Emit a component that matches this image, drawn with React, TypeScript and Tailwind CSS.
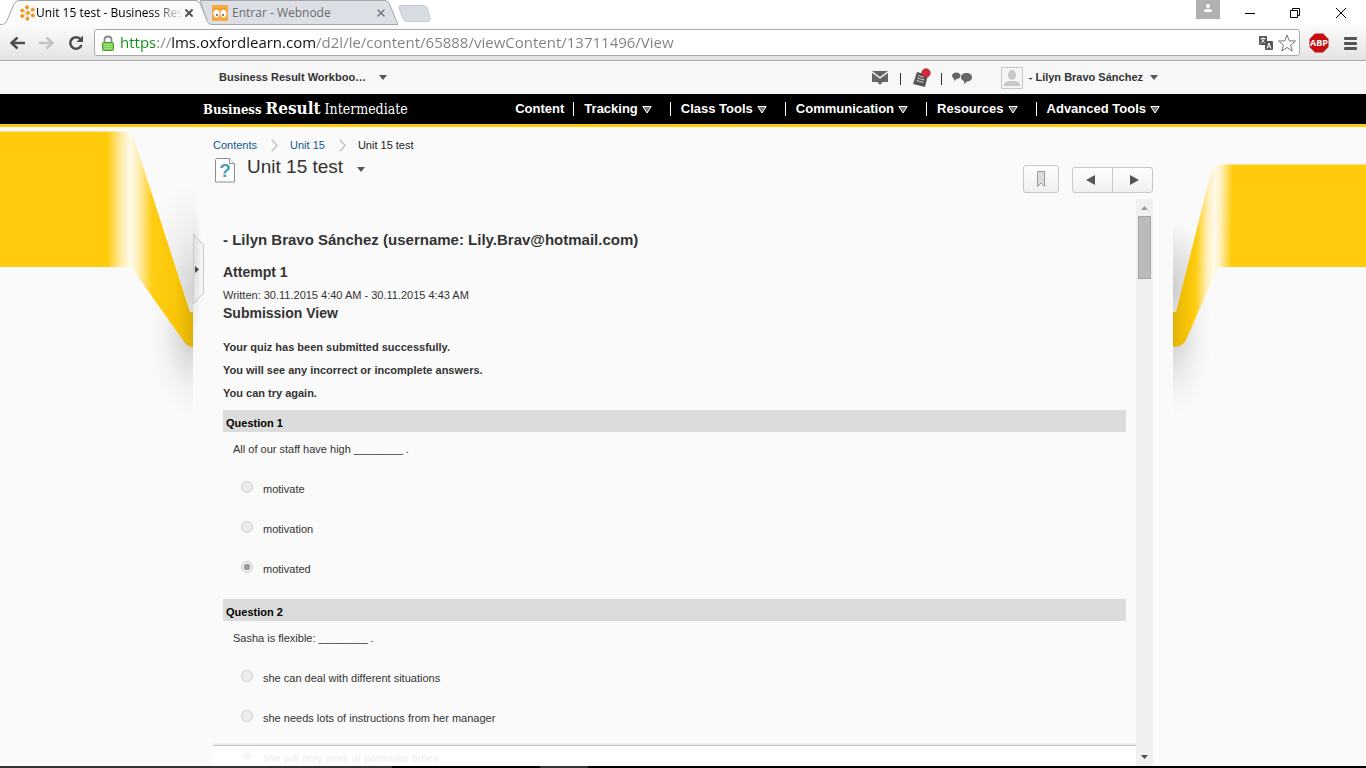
import React from 'react';
import { X } from 'lucide-react';

interface Question {
  id: number;
  text: string;
  options: string[];
  selected: number;
}

const questions: Question[] = [
  {
    id: 1,
    text: 'All of our staff have high ________ .',
    options: ['motivate', 'motivation', 'motivated'],
    selected: 2
  },
  {
    id: 2,
    text: 'Sasha is flexible: ________ .',
    options: [
      'she can deal with different situations',
      'she needs lots of instructions from her manager',
      'she will only work at particular times'
    ],
    selected: 2
  }
];

const navItems = ['Tracking', 'Class Tools', 'Communication', 'Resources', 'Advanced Tools'];

const Caret: React.FC<{ className?: string }> = ({ className }) => (
  <svg className={className} width="8" height="5" viewBox="0 0 8 5" fill="#565656">
    <path d="M0 0h8L4 5z" />
  </svg>
);

const TabStrip: React.FC = () => (
  <div className="relative flex h-[25px] items-start bg-white font-['Open_Sans','Noto_Sans',sans-serif] text-[12px] leading-[25px]">
    <div className="relative z-10 h-[25px] w-[212px] shrink-0">
      <svg className="absolute inset-0" width="213" height="25" viewBox="0 0 213 25">
        <path d="M0 24.5c4 0 6-1 7-4L14 4q2-3.500 5-3.500h177q3 0 4.500 3.500l6.500 16.500c1 3 2 4 6 4V25H0z" fill="#fbfbfb" />
        <path d="M0 24.500c4 0 6-1 7-4L14 4q2-3.500 5-3.500h177q3 0 4.500 3.500l6.500 16.500c1 3 2 4 6 4" fill="none" stroke="#a5a5a5" />
      </svg>
      <div className="relative flex items-center justify-between pl-5 pr-[17px]">
        <svg className="shrink-0" width="16" height="16" viewBox="0 0 16 16" fill="#f7941d" stroke="#f7941d">
          <path d="M8 8L7 2.200M8 8l4.800-3.500M8 8l5 2.500M8 8l-.5 5.800M8 8l-5.800 3M8 8L2.200 5.500" strokeWidth=".6" />
          <circle cx="8" cy="8" r="1.300" />
          <circle cx="7" cy="2.200" r="1.500" />
          <circle cx="12.800" cy="4.500" r="1.500" />
          <circle cx="13" cy="10.500" r="1.500" />
          <circle cx="7.500" cy="13.800" r="1.500" />
          <circle cx="2.200" cy="11" r="1.500" />
          <circle cx="2.200" cy="5.500" r="1.500" />
        </svg>
        <span className="whitespace-nowrap text-black mask-r-from-80%">Unit 15 test - Business Res</span>
        <button aria-label="Close tab" className="shrink-0 text-[#555]">
          <X size={12} strokeWidth={4} />
        </button>
      </div>
    </div>
    <div className="relative -ml-3 h-[25px] w-[198px] shrink-0">
      <svg className="absolute inset-0" width="198" height="25" viewBox="0 0 198 25">
        <path d="M0 .5h185q3 0 4.500 3.500L196 20q1 4.500 4 4.500H8z" fill="#dcdfe6" stroke="#a5a5a5" />
      </svg>
      <div className="relative flex items-center pl-3">
        <svg width="16" height="16" viewBox="0 0 16 16">
          <rect width="16" height="16" rx="1" fill="#f8a83c" />
          <ellipse cx="4.500" cy="8.500" rx="3" ry="4" fill="#fff" />
          <ellipse cx="11.500" cy="8.500" rx="3" ry="4" fill="#fff" />
          <circle cx="5" cy="10" r="1" fill="#555" />
          <circle cx="11" cy="10" r="1" fill="#555" />
          <path d="M2 5q2.500-3 5 0M9 5q2.500-3 5 0" fill="none" stroke="#e08a1d" />
        </svg>
        <span className="ml-1 w-[143px] text-[#6b6b6b]">Entrar - Webnode</span>
        <button aria-label="Close tab" className="text-[#777]">
          <X size={12} strokeWidth={3} />
        </button>
      </div>
    </div>
    <button aria-label="New tab" className="mt-[5px]">
      <svg width="33" height="17" viewBox="0 0 33 17">
        <path d="M3 .5h22q3 0 4 2l3 10q1 4-3 4H9q-3 0-4-3L1 3Q.5.500 3 .5z" fill="#d7dbe2" stroke="#c6cad1" />
      </svg>
    </button>
    <div className="ml-auto flex h-[25px] items-start">
      <button aria-label="User" className="flex h-[19px] w-6 justify-center bg-[#b1b1b1] pt-1">
        <svg width="8" height="8" viewBox="0 0 8 8" fill="#fff">
          <circle cx="4" cy="2" r="2" />
          <path d="M0 8V6.500Q1 4.800 4 4.800t4 1.700V8z" />
        </svg>
      </button>
      <button aria-label="Minimize" className="ml-[25px] h-[25px]">
        <svg width="10" height="10" viewBox="0 0 10 10" stroke="#000"><path d="M0 5.500h10" /></svg>
      </button>
      <button aria-label="Restore" className="ml-[35px] h-[25px]">
        <svg width="10" height="10" viewBox="0 0 10 10" fill="none" stroke="#000">
          <path d="M.5 2.500h7v7h-7zM2.500 2.500v-2h7v7h-2" />
        </svg>
      </button>
      <button aria-label="Close" className="mr-5 ml-9 h-[25px]">
        <svg width="10" height="10" viewBox="0 0 10 10" stroke="#000"><path d="M0 0l10 10M10 0L0 10" /></svg>
      </button>
    </div>
  </div>
);

const Toolbar: React.FC = () => (
  <div className="flex h-9 shrink-0 items-center border-b border-[#a9a9a9] bg-linear-to-b from-[#fbfbfb] to-[#e4e4e4] pl-[9px] pr-2">
    <button aria-label="Back">
      <svg width="17" height="14" viewBox="0 0 17 14" fill="none" stroke="#4c4c4c" strokeWidth="2.500">
        <path d="M16 7H3M8.500 1.500L2.500 7l6 5.500" />
      </svg>
    </button>
    <button aria-label="Forward" className="ml-3">
      <svg width="17" height="14" viewBox="0 0 17 14" fill="none" stroke="#c4c4c4" strokeWidth="2.500">
        <path d="M1 7h13M8.500 1.500l6 5.500-6 5.500" />
      </svg>
    </button>
    <button aria-label="Reload" className="ml-[13px]">
      <svg width="16" height="16" viewBox="0 0 16 16">
        <path d="M12.300 4A5.800 5.800 0 1 0 13.500 10" fill="none" stroke="#4c4c4c" strokeWidth="2.500" />
        <path d="M15 .5V7H8.500z" fill="#4c4c4c" />
      </svg>
    </button>
    <div className="ml-2.5 flex h-[27px] flex-1 items-center rounded-[3px] border border-[#a9a9a9] bg-white pl-[7px] pr-[3px]">
      <svg width="12" height="16" viewBox="0 0 12 16">
        <path d="M2.500 8V4.500Q2.500 1.500 6 1.500t3.500 3V8" fill="none" stroke="#8b8b8b" strokeWidth="1.800" />
        <rect x=".5" y="7.500" width="11" height="8" rx="1" fill="#7ccf55" stroke="#4f9b34" />
        <path d="M2 9.500h8M2 11.500h8M2 13.500h8" stroke="#a3e283" />
      </svg>
      <input
        type="text"
        aria-label="Address"
        defaultValue="https://lms.oxfordlearn.com/d2l/le/content/65888/viewContent/13711496/View"
        className="mb-0.5 ml-1.5 h-6 min-w-0 flex-1 bg-[linear-gradient(90deg,#0c8f12_35px,#888_35px,#888_52px,#111_52px,#111_195px,#808080_195px)] bg-clip-text font-['Open_Sans','Noto_Sans',sans-serif] text-[15px] text-transparent outline-none"
      />
      <button aria-label="Translate">
        <svg width="14" height="14" viewBox="0 0 14 14">
          <rect width="8" height="9" rx="1" fill="#565656" />
          <path d="M1.500 2.500h5M4 1v1.500M5.500 2.500Q5 5.500 1.500 7M2.500 2.500Q3.500 6 6.500 7" stroke="#fff" strokeWidth=".8" fill="none" />
          <rect x="6" y="5" width="8" height="9" rx="1" fill="#565656" />
          <path d="M8 12.500l2-5.500 2 5.500M8.700 10.800h2.600" stroke="#fff" fill="none" />
        </svg>
      </button>
      <button aria-label="Bookmark this page" className="ml-[5px]">
        <svg width="18" height="18" viewBox="0 0 18 18" fill="#fff" stroke="#777" strokeLinejoin="round">
          <path d="M9 1l2.200 5.800 6.300.2-4.900 3.900 1.700 6.100L9 13.500 3.700 17l1.700-6.100L.5 7l6.300-.2z" />
        </svg>
      </button>
    </div>
    <button aria-label="Adblock Plus" className="ml-[9px]">
      <svg width="20" height="20" viewBox="0 0 20 20">
        <path d="M6 .5h8L19.500 6v8L14 19.500H6L.5 14V6z" fill="#c70d0d" />
        <text x="10" y="13" textAnchor="middle" fill="#fff" fontSize="9" fontWeight="bold" fontFamily="Open Sans, sans-serif">ABP</text>
      </svg>
    </button>
    <button aria-label="Menu" className="ml-[15px]">
      <svg width="14" height="14" viewBox="0 0 14 14" fill="#555">
        <rect x="0" y="1" width="13" height="3" rx="1" />
        <rect x="0" y="6" width="13" height="3" rx="1" />
        <rect x="0" y="11" width="13" height="3" rx="1" />
      </svg>
    </button>
  </div>
);

const MiniBar: React.FC = () => (
  <div className="h-[33px] shrink-0 bg-[#f7f7f7]">
    <div className="mx-auto flex h-[33px] w-full max-w-[960px] items-center pl-4 text-[11px] font-bold text-[#333]">
      <button className="flex items-center">
        Business Result Workboo…
        <Caret className="ml-[13px]" />
      </button>
      <div className="ml-auto flex items-center pr-[5px]">
        <button aria-label="Messages">
          <svg width="16" height="14" viewBox="0 0 16 14" fill="#666">
            <path d="M0 0h16L8 6z" />
            <path d="M0 1.800l8 6 8-6V11h-5.500L8 14l-2.500-3H0z" />
          </svg>
        </button>
        <span className="ml-3 mt-0.5 h-3 w-px bg-[#333]" />
        <button aria-label="Updates" className="ml-3">
          <svg width="18" height="20" viewBox="0 0 18 20">
            <path d="M4 4l11 3-3 12L0 16z" fill="#555" />
            <path d="M5 7.500l6 1.700M4.300 10l7 2M3.600 12.500l7 2" stroke="#ccc" />
            <circle cx="13" cy="5" r="4.200" fill="#d8293a" stroke="#97303a" strokeWidth=".8" />
          </svg>
        </button>
        <span className="ml-[10px] mt-0.5 h-3 w-px bg-[#333]" />
        <button aria-label="Subscriptions" className="ml-[10px]">
          <svg width="20" height="12" viewBox="0 0 20 12" fill="#666">
            <path d="M4.300.5C6.700.500 8.500 1.800 8.500 3.800S6.700 7 4.600 7L2 9V6.500C.8 6 0 5 0 3.800 0 1.800 2 .5 4.300.5z" />
            <path d="M14.500 1c3.300 0 5.500 1.800 5.500 4.200S17.800 9.500 15 9.500L12 12V9C10 8.300 9 7 9 5.200 9 2.800 11.200 1 14.500 1z" />
          </svg>
        </button>
        <button className="ml-[29px] flex items-center">
          <svg width="22" height="22" viewBox="0 0 22 22">
            <rect x=".5" y=".5" width="21" height="21" fill="#f5f5f5" stroke="#c8c8c8" />
            <ellipse cx="11" cy="8" rx="4" ry="5" fill="#c8c8c8" />
            <path d="M3 19v-2q1-2 5-3h6q4 1 5 3v2z" fill="#c8c8c8" />
          </svg>
          <span className="ml-1.5">- Lilyn Bravo Sánchez</span>
          <Caret className="ml-[7px]" />
        </button>
      </div>
    </div>
  </div>
);

const NavBar: React.FC = () => (
  <nav className="h-[33px] shrink-0 border-b-3 border-[#ffcb05] bg-black">
    <div className="mx-auto flex h-[30px] w-full max-w-[960px] items-center text-white">
      <a href="#home" className="flex items-baseline gap-1 whitespace-nowrap font-['DejaVu_Serif_Condensed','DejaVu_Serif',serif] text-[14px] leading-[28px]">
        <span className="text-[13px] font-bold">Business</span>
        <span className="text-[17px] font-bold">Result</span>
        <span>Intermediate</span>
      </a>
      <div className="ml-auto flex items-center pr-[3px] text-[13px] font-bold">
        <a href="#content" className="pr-[9px]">Content</a>
        {navItems.map((item, i) => (
          <div key={item} className="flex items-center">
            <span className="h-3.5 w-px bg-white" />
            <button className={`flex items-center pl-2.5 ${i < navItems.length - 1 ? 'pr-[18px]' : ''}`}>
              {item}
              <svg className="ml-1 mt-0.5" width="10" height="8" viewBox="0 0 10 8">
                <path d="M.8.500h8.400L5 7z" fill="#777" stroke="#fff" />
              </svg>
            </button>
          </div>
        ))}
      </div>
    </div>
  </nav>
);

const LeftRibbon: React.FC = () => (
  <div className="flex min-w-0 flex-1 justify-end overflow-hidden">
    <div className="mt-[5px] h-[135px] flex-1 bg-[#ffcb0a]" />
    <svg className="shrink-0" width="193" height="300" viewBox="0 127 193 300">
      <defs>
        <linearGradient id="leftGloss" gradientUnits="userSpaceOnUse" x1="107" y1="0" x2="193" y2="0">
          <stop offset="0" stopColor="#ffcb0a" />
          <stop offset=".16" stopColor="#ffeaa5" />
          <stop offset=".27" stopColor="#fffaea" />
          <stop offset=".36" stopColor="#ffefba" />
          <stop offset=".53" stopColor="#ffcd12" />
          <stop offset=".8" stopColor="#fbc608" />
          <stop offset="1" stopColor="#dcae06" />
        </linearGradient>
        <radialGradient id="leftUpper" gradientUnits="userSpaceOnUse" cx="0" cy="0" r="1" gradientTransform="translate(193 290) scale(44 110)">
          <stop offset="0" stopColor="#000" stopOpacity=".16" />
          <stop offset=".5" stopColor="#000" stopOpacity=".05" />
          <stop offset="1" stopColor="#000" stopOpacity="0" />
        </radialGradient>
        <radialGradient id="leftLower" gradientUnits="userSpaceOnUse" cx="0" cy="0" r="1" gradientTransform="translate(193 335) scale(46 85)">
          <stop offset="0" stopColor="#000" stopOpacity=".2" />
          <stop offset=".3" stopColor="#000" stopOpacity=".11" />
          <stop offset=".65" stopColor="#000" stopOpacity=".03" />
          <stop offset="1" stopColor="#000" stopOpacity="0" />
        </radialGradient>
      </defs>
      <path d="M134 138L190 312h3V170z" fill="url(#leftUpper)" />
      <path d="M131 267l59 79h3v80h-62z" fill="url(#leftLower)" />
      <path d="M0 131.500h124q8 0 10 7L190 312h3v35q-5 0-8-4l-54-76H0z" fill="url(#leftGloss)" />
    </svg>
  </div>
);

const RightRibbon: React.FC = () => (
  <div className="flex min-w-0 flex-1 overflow-hidden">
    <svg className="shrink-0" width="193" height="300" viewBox="1173 127 193 300">
      <defs>
        <linearGradient id="rightGloss" gradientUnits="userSpaceOnUse" x1="1173" y1="230" x2="1232" y2="231">
          <stop offset="0" stopColor="#e0b106" />
          <stop offset=".3" stopColor="#fbc608" />
          <stop offset=".4" stopColor="#ffcd12" />
          <stop offset=".58" stopColor="#ffeeb5" />
          <stop offset=".7" stopColor="#fffaea" />
          <stop offset=".8" stopColor="#fff0c0" />
          <stop offset="1" stopColor="#ffcb0a" />
        </linearGradient>
        <radialGradient id="rightUpper" gradientUnits="userSpaceOnUse" cx="0" cy="0" r="1" gradientTransform="translate(1173 290) scale(36 70)">
          <stop offset="0" stopColor="#000" stopOpacity=".18" />
          <stop offset="1" stopColor="#000" stopOpacity="0" />
        </radialGradient>
        <radialGradient id="rightLower" gradientUnits="userSpaceOnUse" cx="0" cy="0" r="1" gradientTransform="translate(1173 335) scale(40 85)">
          <stop offset="0" stopColor="#000" stopOpacity=".18" />
          <stop offset=".3" stopColor="#000" stopOpacity=".1" />
          <stop offset=".65" stopColor="#000" stopOpacity=".03" />
          <stop offset="1" stopColor="#000" stopOpacity="0" />
        </radialGradient>
      </defs>
      <path d="M1173 200h32l-29 112h-3z" fill="url(#rightUpper)" />
      <path d="M1173 340l40-70v150h-40z" fill="url(#rightLower)" />
      <path d="M1366 164.500h-146q-7 0-9 8L1176 312h-3v35q10 0 13-7l32-73h148z" fill="url(#rightGloss)" />
    </svg>
    <div className="mt-[38px] h-[102px] flex-1 bg-[#ffcb0a]" />
  </div>
);

const Crumb: React.FC = () => (
  <svg className="ml-[14px] mr-3" width="7" height="13" viewBox="0 0 7 13" fill="none" stroke="#c4c4c4" strokeWidth="1.500">
    <path d="M.8.800L6 6.500.8 12.200" />
  </svg>
);

const ContentHeader: React.FC = () => (
  <header className="shrink-0">
    <div className="flex h-4 items-center text-[11px] text-[#0d5a8c]">
      <a href="#contents">Contents</a>
      <Crumb />
      <a href="#unit">Unit 15</a>
      <Crumb />
      <span className="text-[#222]">Unit 15 test</span>
    </div>
    <div className="flex h-[46px] items-start">
      <svg className="ml-0.5 mt-[5px] shrink-0" width="20" height="25" viewBox="0 0 20 25">
        <path d="M1.500.500h13l5 5v18.500H.5V1.500z" fill="#fdfdfd" stroke="#8e8e8e" />
        <path d="M14.500.5v5h5" fill="#fff" stroke="#8e8e8e" />
        <text x="10" y="19" textAnchor="middle" fill="#4f9bb5" fontSize="19" fontWeight="bold" fontFamily="Liberation Sans, sans-serif">?</text>
      </svg>
      <h1 className="ml-3 mt-0.5 text-[19px] leading-6 text-[#333]">Unit 15 test</h1>
      <button aria-label="Actions" className="ml-[14px] mt-[14px]">
        <Caret />
      </button>
      <button aria-label="Bookmark" className="ml-auto mt-3 flex h-7 w-9 items-center justify-center rounded-[3px] border border-[#c8c8c8] bg-linear-to-b from-[#fdfdfd] to-[#f0f0f0]">
        <svg width="8" height="16" viewBox="0 0 8 16">
          <path d="M.5.500h7v15L4 12 .5 15.500z" fill="#dcdcdc" stroke="#999" />
        </svg>
      </button>
      <div className="ml-[13px] mt-3.5 flex h-[26px] w-[81px] rounded-[3px] border border-[#c8c8c8] bg-linear-to-b from-[#fdfdfd] to-[#f0f0f0]">
        <button aria-label="Previous" className="flex flex-1 items-center justify-center border-r border-[#c8c8c8] pr-1">
          <svg width="9" height="10" viewBox="0 0 9 10" fill="#565656"><path d="M9 0v10L0 5z" /></svg>
        </button>
        <button aria-label="Next" className="flex flex-1 items-center justify-center pl-1">
          <svg width="9" height="10" viewBox="0 0 9 10" fill="#565656"><path d="M0 0v10l9-5z" /></svg>
        </button>
      </div>
    </div>
  </header>
);

const QuestionBlock: React.FC<{ question: Question }> = ({ question }) => (
  <fieldset className="text-[11px] text-[#333]">
    <h3 className="h-[22px] bg-[#dcdcdc] px-[3px] pt-[3px] font-bold leading-5 text-black">Question {question.id}</h3>
    <p className="px-2.5 pb-2.5 pt-[7px] leading-5">{question.text}</p>
    {question.options.map((option, i) => (
      <label key={option} className="flex h-10 items-center pl-[18px]">
        <input
          type="radio"
          name={`question-${question.id}`}
          defaultChecked={i === question.selected}
          disabled
          className="mb-1 mr-2.5 size-3 appearance-none rounded-full border border-[#cecece] bg-[#ececec] checked:bg-[radial-gradient(circle,#9b9b9b_3px,#ececec_3px)]"
        />
        {option}
      </label>
    ))}
    <div className="h-2.5" />
  </fieldset>
);

const Submission: React.FC = () => (
  <div className="flex min-h-0 flex-1">
    <div className="relative min-w-0 flex-1 overflow-hidden">
      <div className="px-2.5 pt-[30px] text-[11px] text-[#333]">
        <h2 className="text-[15px] font-bold leading-[22px]">- Lilyn Bravo Sánchez (username: Lily.Brav@hotmail.com)</h2>
        <h3 className="mt-[11px] text-[14px] font-bold leading-5">Attempt 1</h3>
        <p className="mt-[5px] leading-4">Written: 30.11.2015 4:40 AM - 30.11.2015 4:43 AM</p>
        <h3 className="text-[14px] font-bold leading-5">Submission View</h3>
        <div className="mb-[9px] mt-[17px] space-y-2 font-bold leading-[15px]">
          <p>Your quiz has been submitted successfully.</p>
          <p>You will see any incorrect or incomplete answers.</p>
          <p>You can try again.</p>
        </div>
        {questions.map(question => (
          <QuestionBlock key={question.id} question={question} />
        ))}
      </div>
      {/* floating footer over the last visible row */}
      <div className="absolute inset-x-0 bottom-0 h-[21px] border-t border-[#c6c6c6] bg-white/90 shadow-[0_-1px_2px_#e4e4e4]" />
    </div>
    <div className="flex w-[17px] shrink-0 flex-col items-center bg-[#f0f0f0]">
      <svg className="mt-[7px]" width="7" height="4" viewBox="0 0 7 4" fill="#9a9a9a"><path d="M3.500 0L7 4H0z" /></svg>
      <div className="mt-1.5 h-[63px] w-[13px] border border-[#a6a6a6] bg-[#bbb]" />
      <svg className="mb-[7px] mt-auto" width="7" height="4" viewBox="0 0 7 4" fill="#505050"><path d="M0 0h7L3.500 4z" /></svg>
    </div>
  </div>
);

const App: React.FC = () => {
  return (
    <div className="flex h-screen flex-col overflow-hidden bg-[#fafafa] font-['Liberation_Sans',Arial,sans-serif]">
      <TabStrip />
      <Toolbar />
      <MiniBar />
      <NavBar />
      <main className="flex min-h-0 flex-1">
        <LeftRibbon />
        <div className="relative flex w-full max-w-[980px] flex-col px-5 pt-2.5">
          <button aria-label="Show table of contents" className="absolute left-0 top-[60px]">
            <svg width="12" height="150" viewBox="0 0 12 150">
              <defs>
                <radialGradient id="handleShade" gradientUnits="userSpaceOnUse" cx="0" cy="0" r="1" gradientTransform="translate(0 80) scale(9 75)">
                  <stop offset="0" stopColor="#000" stopOpacity=".12" />
                  <stop offset="1" stopColor="#000" stopOpacity="0" />
                </radialGradient>
              </defs>
              <path d="M0 47l10.500 11v48L0 117z" fill="#f6f6f6" stroke="#c8c8c8" />
              <path d="M0 0h12v150H0z" fill="url(#handleShade)" />
              <path d="M2 79v7l4-3.500z" fill="#444" />
            </svg>
          </button>
          <ContentHeader />
          <Submission />
        </div>
        <RightRibbon />
      </main>
      <div className="flex h-0.5 shrink-0 bg-black">
        <div className="w-[392px] bg-[#333]" />
        <div className="ml-[148px] w-12 bg-[#333]" />
      </div>
    </div>
  );
};

export default App;
